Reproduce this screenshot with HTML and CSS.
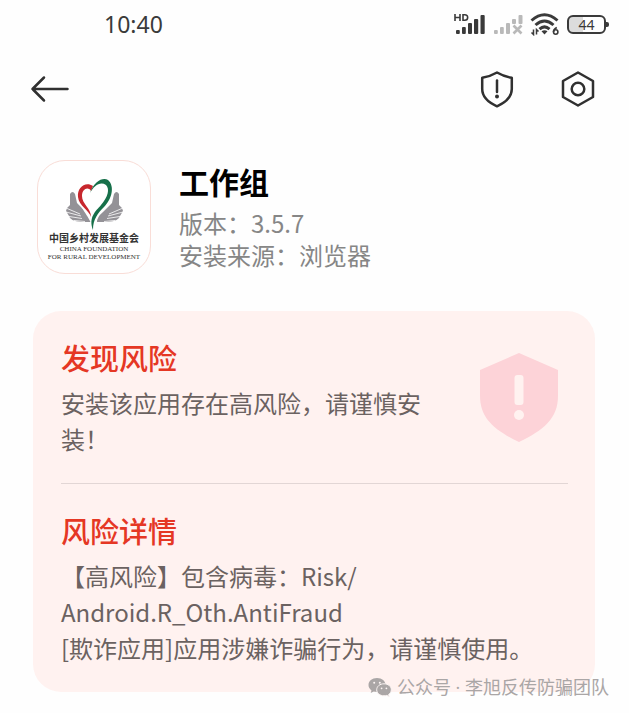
FILE: index.html
```html
<!DOCTYPE html>
<html lang="zh-CN">
<head>
<meta charset="utf-8">
<meta name="viewport" content="width=device-width, initial-scale=1">
<title>工作组</title>
<link rel="stylesheet" href="styles.css">
</head>
<body>
<header class="status">
  <time class="clock">10:40</time>
  <div class="indicators">
    <svg width="32" height="24" viewBox="0 0 32 24" fill="#3a3a3a" aria-hidden="true">
      <path d="M1 2v7M6 2v7M1 5.500h5M9 2.700v5.600h1.800c3.800 0 3.800-5.600 0-5.600z" fill="none" stroke="#3a3a3a" stroke-width="1.600"/>
      <rect x="2" y="18" width="3.800" height="4" rx="1"/><rect x="8" y="15" width="3.800" height="7" rx="1"/><rect x="14" y="11" width="4" height="11" rx="1"/><rect x="20" y="7" width="4.200" height="15" rx="1"/><rect x="26.500" y="3" width="4.200" height="19" rx="1"/>
    </svg>
    <svg width="30" height="24" viewBox="0 0 30 24" fill="#b9b9b9" aria-hidden="true">
      <rect x="1" y="18" width="3.800" height="4" rx="1"/><rect x="7" y="15" width="3.800" height="7" rx="1"/><rect x="13" y="11" width="4" height="11" rx="1"/><rect x="19" y="7" width="4" height="5" rx="1"/><rect x="25.500" y="3" width="4" height="9" rx="1"/>
      <path d="M20.500 13.500l8 8M28.500 13.500l-8 8" stroke="#b9b9b9" stroke-width="2.600"/>
    </svg>
    <svg width="30" height="24" viewBox="0 0 30 24" fill="none" stroke="#3a3a3a" aria-hidden="true">
      <path d="M1.500 8.500q13-11.500 26 0M5.500 13q9-8 18 0M9.500 17.200q5-4.600 10 0" stroke-width="3"/>
      <path d="M11.500 19.300q3-2.200 6 0l-3 3.200z" fill="#3a3a3a" stroke="none"/>
      <path d="M3.500 17.500v5l-2-2M6.500 22.500v-5l2 2" stroke-width="1.500"/>
      <path d="M26.800 15.500q-3.300 1.500-3.300 4.500" stroke-width="1.600"/><circle cx="25.700" cy="20" r="2.200" stroke-width="1.600"/>
    </svg>
    <span class="battery"><span class="battery-level">44</span></span>
  </div>
</header>

<nav class="toolbar">
  <button class="tool" type="button" aria-label="返回">
    <svg width="40" height="40" viewBox="0 0 40 40"><path d="M14 8.500L2.500 20L14 31.500M2.500 20H37.500"/></svg>
  </button>
  <div class="tools">
    <button class="tool" type="button" aria-label="安全">
      <svg width="40" height="40" viewBox="0 0 40 40"><path d="M20 3.500Q27 7.600 34.800 8.700V20C34.800 28 29.500 33 20 37.300C10.500 33 5.200 28 5.200 20V8.700Q13 7.600 20 3.500Z"/><path d="M20 11.500V23"/><circle class="solid" cx="20" cy="27.500" r="2"/></svg>
    </button>
    <button class="tool" type="button" aria-label="设置">
      <svg width="40" height="40" viewBox="0 0 40 40"><path d="M20 3.500L35 12V28L20 36.500L5 28V12Z"/><circle cx="20" cy="20" r="6.300"/></svg>
    </button>
  </div>
</nav>

<main>
  <section class="app">
    <div class="logo">
      <svg width="60" height="54" viewBox="-1 0 60 54" aria-hidden="true">
        <g id="hand" fill="#949297">
          <path d="M5 17q2.500-4 5 0l2 9 9 9q6 5 6 10h-11Q5 44 4 39l-3-5 1-3 3-3z"/>
          <path d="M1 31l14 6M1 35l15 4M4 39.500l13 2M9 43.500l11 1" stroke="#fff" stroke-width=".8" fill="none"/>
        </g>
        <use href="#hand" transform="translate(59 0) scale(-1 1)"/>
        <path d="M27 52C27 40 13 32 14 19C14 11 20 6 26 11C35-1 47 2 46 15C45 30 28 35 27 52Z" fill="#fff"/>
        <path d="M28 9C20 4 12 11 13 20C14 29 24 33 26 40C26 31 17 27 17 19C17 12 23 9 26 14Z" fill="#c7272d"/>
        <path d="M25 16C29 4 38 0 43 3C50 9 47 22 39 30C33 36 28 42 28 53C23 40 31 34 36 28C43 20 45 12 41 8C35 4 29 9 25 16Z" fill="#17704a"/>
      </svg>
      <span class="logo-name">中国乡村发展基金会</span>
      <span class="logo-en">CHINA FOUNDATION</span>
      <span class="logo-en">FOR RURAL DEVELOPMENT</span>
    </div>
    <div>
      <h1 class="app-name">工作组</h1>
      <p class="meta">版本：3.5.7</p>
      <p class="meta">安装来源：浏览器</p>
    </div>
  </section>

  <div class="card">
    <section class="risk">
      <div class="risk-text">
        <h2>发现风险</h2>
        <p>安装该应用存在高风险，请谨慎安装！</p>
      </div>
      <svg class="shield" width="78" height="90" viewBox="0 0 78 90" aria-hidden="true">
        <path d="M39 0L78 17V43C78 65 64 77 39 89C14 77 0 65 0 43V17Z" fill="#fdd3d8"/>
        <rect x="34.500" y="22" width="9" height="30" rx="3" fill="#fff2f0"/><circle cx="39" cy="62" r="5" fill="#fff2f0"/>
      </svg>
    </section>
    <section class="details">
      <h2>风险详情</h2>
      <p>【高风险】包含病毒：Risk/<wbr>Android.R_Oth.AntiFraud</p>
      <p>[欺诈应用]应用涉嫌诈骗行为，请谨慎使用。</p>
    </section>
  </div>
</main>

<footer class="watermark">
  <svg width="24" height="20" viewBox="0 0 24 20" aria-hidden="true">
    <path d="M9 1C4 1 .5 4 .5 8c0 2.300 1.200 4.200 3 5.400L2.700 16l3-1.500c1 .3 2.100.5 3.300.5 5 0 8.500-3 8.500-7S14 1 9 1z" fill="#aaa6a6"/>
    <path d="M16 6.800c-4.200 0-7.300 2.600-7.300 6s3.100 6 7.300 6c1 0 2-.2 2.800-.4l2.500 1.300-.7-2.200c1.700-1.100 2.700-2.800 2.700-4.700 0-3.400-3.100-6-7.300-6z" fill="#aaa6a6" stroke="#fcf5f4"/>
    <g fill="#fcf5f4"><circle cx="6.200" cy="5.700" r="1"/><circle cx="11.800" cy="5.700" r="1"/><circle cx="13.600" cy="11.300" r=".9"/><circle cx="18.400" cy="11.300" r=".9"/></g>
  </svg>
  <span>公众号 · 李旭反传防骗团队</span>
</footer>
</body>
</html>
```
FILE: styles.css
```css
* {
  box-sizing: border-box;
}

body {
  margin: 0;
  background: #fefefe;
  color: #6b6261;
  font-family: "Noto Sans CJK SC", sans-serif;
  font-size: 24px;
  line-height: 36px;
  text-spacing-trim: space-all;
}

h1, h2, p {
  margin: 0;
}

.status {
  display: flex;
  justify-content: space-between;
  align-items: center;
  height: 48px;
  padding: 0 23px 0 104px;
  color: #3a3a3a;
}

.clock {
  font-family: "Noto Sans", sans-serif;
  font-size: 23px;
}

.indicators {
  display: flex;
  align-items: center;
  gap: 7px;
}

.battery {
  position: relative;
  width: 39px;
  height: 19px;
  border: 2px solid #3a3a3a;
  border-radius: 6px;
  background: linear-gradient(90deg, #dcdcdc 40%, transparent 40%);
}

.battery::after {
  content: "";
  position: absolute;
  top: 5px;
  right: -5px;
  width: 3px;
  height: 5px;
  border-radius: 0 2px 2px 0;
  background: #3a3a3a;
}

.battery-level {
  display: block;
  font-family: "Noto Sans", sans-serif;
  font-size: 14px;
  line-height: 15px;
  text-align: center;
}

.toolbar {
  display: flex;
  justify-content: space-between;
  padding: 21px 31px 0 30px;
}

.tools {
  display: flex;
  gap: 41px;
}

.tool {
  display: block;
  padding: 0;
  border: 0;
  background: none;
}

.tool svg {
  display: block;
  fill: none;
  stroke: #303030;
  stroke-width: 2.5px;
  stroke-linecap: round;
  stroke-linejoin: round;
}

.tool .solid {
  fill: #303030;
  stroke: none;
}

.app {
  display: flex;
  gap: 28px;
  padding: 51px 37px 37px;
}

.logo {
  display: flex;
  flex: none;
  flex-direction: column;
  align-items: center;
  width: 114px;
  height: 114px;
  padding-top: 16px;
  border: 1px solid #f9ddd7;
  border-radius: 28px;
  background: #fff;
  color: #333;
  white-space: nowrap;
}

.logo-name {
  font-size: 10px;
  font-weight: 700;
  line-height: 14px;
}

.logo-en {
  font-family: "Liberation Serif", serif;
  font-size: 7px;
  line-height: 8px;
}

.app-name {
  margin-bottom: 5px;
  color: #000;
  font-size: 30px;
  font-weight: 700;
  line-height: 42px;
}

.meta {
  color: #868686;
  line-height: 32px;
}

.card {
  margin: 0 34px 0 33px;
  padding: 27px 27px 26px 28px;
  border-radius: 28px;
  background: #fff2f0;
}

.card h2 {
  margin-bottom: 9px;
  color: #e53724;
  font-size: 29px;
  font-weight: 500;
  line-height: 38px;
}

.risk {
  display: flex;
  justify-content: space-between;
  padding-bottom: 26px;
  border-bottom: 1px solid #e2d6d5;
}

.risk-text {
  flex: 0 1 370px;
}

.shield {
  flex: none;
  margin: 15px 10px 0 0;
}

.details {
  padding-top: 27px;
}

.watermark {
  position: absolute;
  right: 20px;
  bottom: 12px;
  display: flex;
  align-items: center;
  gap: 5px;
  color: #aaa6a6;
  font-family: "Open Sans", "Noto Sans CJK SC", sans-serif;
  font-size: 18px;
  line-height: 28px;
}
```
